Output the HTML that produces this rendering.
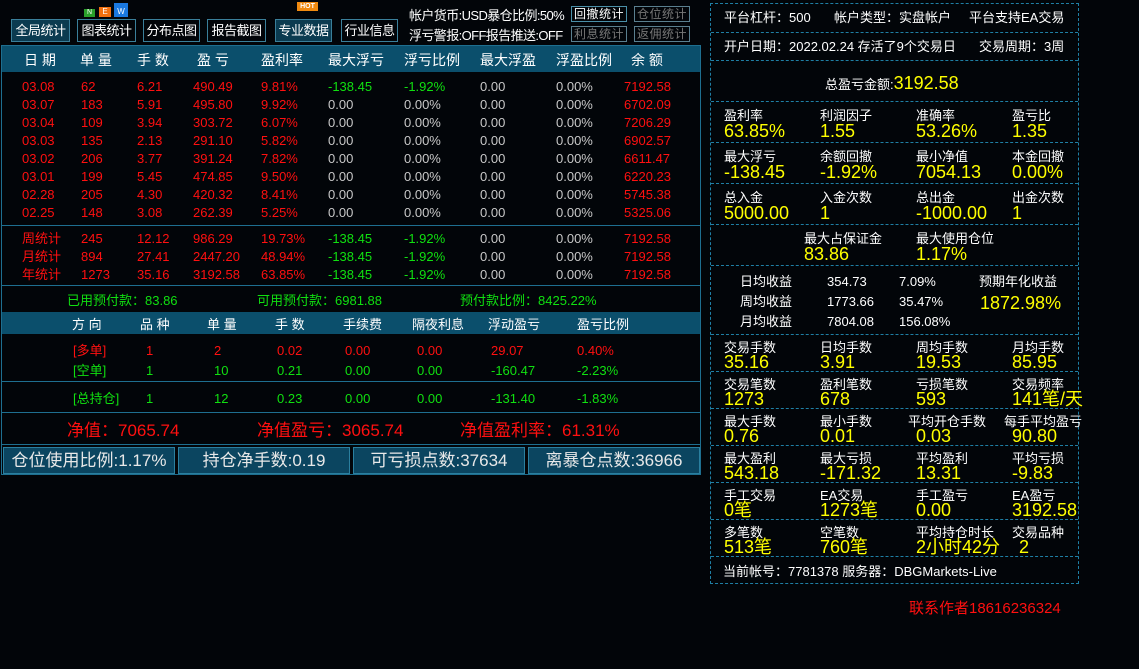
<!DOCTYPE html>
<html><head><meta charset="utf-8"><style>
*{margin:0;padding:0;box-sizing:border-box}
body{width:1139px;height:669px;background:#020509;position:relative;overflow:hidden;font-family:"Liberation Sans","Noto Sans CJK SC",sans-serif;font-size:13px;color:#fff}
.a{position:absolute;white-space:nowrap;line-height:1}
.r{color:#ff1010}.g{color:#10e010}.w{color:#c8c8c8}.y{color:#ffff00}
.btn{position:absolute;top:19px;height:23px;background:#0b3b50;border:1px solid #3a7f9a;color:#fff;font-size:13px;text-align:center;line-height:21px;white-space:nowrap;letter-spacing:-0.5px;overflow:hidden}
.sb{position:absolute;height:16px;border:1px solid #5a7f8f;font-size:12px;line-height:14px;text-align:center;width:56px;white-space:nowrap;letter-spacing:0.5px;overflow:hidden}
.hl{position:absolute;left:1px;width:699px;height:1px;background:#1e6f90}
.dl{position:absolute;left:711px;width:367px;border-top:1px dashed #1f7fa5}
.lb{position:absolute;font-size:13px;line-height:1;white-space:nowrap}
.vl{position:absolute;font-size:18px;line-height:1;color:#ffff00;white-space:nowrap}
.bb{position:absolute;top:447px;height:27px;width:172px;background:#0b4560;border:1px solid #2a7f9f;color:#e8e8e8;font-size:17px;text-align:center;line-height:25px;white-space:nowrap}
</style></head><body>
<div class="btn" style="left:11px;width:59px">全局统计</div>
<div class="btn" style="left:77px;width:59px;background:#020509">图表统计</div>
<div class="btn" style="left:143px;width:57px;background:#020509">分布点图</div>
<div class="btn" style="left:207px;width:59px;background:#020509">报告截图</div>
<div class="btn" style="left:275px;width:57px">专业数据</div>
<div class="btn" style="left:341px;width:57px;background:#020509">行业信息</div>
<div class="a" style="left:84px;top:9px;width:11px;height:8px;background:#2aa02a;font-size:7px;color:#fff;text-align:center">N</div>
<div class="a" style="left:99px;top:7px;width:12px;height:10px;background:#f07010;font-size:8px;color:#fff;text-align:center;line-height:10px">E</div>
<div class="a" style="left:114px;top:3px;width:14px;height:14px;background:#1a78e0;font-size:8px;color:#fff;text-align:center;line-height:18px">W</div>
<div class="a" style="left:297px;top:2px;width:21px;height:9px;background:#f08a10;font-size:7px;color:#fff;text-align:center;line-height:9px;font-weight:bold">HOT</div>
<div class="a" style="left:409px;top:9px;font-size:13px;letter-spacing:-0.6px;color:#fff">帐户货币:USD暴仓比例:50%</div>
<div class="a" style="left:409px;top:29px;font-size:13px;letter-spacing:-0.6px;color:#fff">浮亏警报:OFF报告推送:OFF</div>
<div class="sb" style="left:571px;top:6px;color:#fff;border-color:#4a8fa8">回撤统计</div>
<div class="sb" style="left:634px;top:6px;color:#777">仓位统计</div>
<div class="sb" style="left:571px;top:26px;color:#777">利息统计</div>
<div class="sb" style="left:634px;top:26px;color:#777">返佣统计</div>

<div class="a" style="left:1px;top:45px;width:700px;height:430px;border:1px solid #1e6f90"></div>
<div class="a" style="left:2px;top:46px;width:698px;height:26px;background:#0b4f6c"></div>
<div class="a" style="top:53px;left:24px;font-size:14px;color:#fff">日 期</div>
<div class="a" style="top:53px;left:80px;font-size:14px">单 量</div>
<div class="a" style="top:53px;left:137px;font-size:14px">手 数</div>
<div class="a" style="top:53px;left:197px;font-size:14px">盈 亏</div>
<div class="a" style="top:53px;left:261px;font-size:14px">盈利率</div>
<div class="a" style="top:53px;left:328px;font-size:14px">最大浮亏</div>
<div class="a" style="top:53px;left:404px;font-size:14px">浮亏比例</div>
<div class="a" style="top:53px;left:480px;font-size:14px">最大浮盈</div>
<div class="a" style="top:53px;left:556px;font-size:14px">浮盈比例</div>
<div class="a" style="top:53px;left:631px;font-size:14px">余 额</div>

<div class="hl" style="top:225px"></div>
<div class="hl" style="top:285px"></div>
<div class="a g" style="left:67px;top:294px">已用预付款：83.86</div>
<div class="a g" style="left:257px;top:294px">可用预付款：6981.88</div>
<div class="a g" style="left:460px;top:294px">预付款比例：8425.22%</div>
<div class="a" style="left:2px;top:312px;width:698px;height:22px;background:#0b4f6c"></div>
<div class="a" style="top:318px;left:72px">方 向</div>
<div class="a" style="top:318px;left:140px">品 种</div>
<div class="a" style="top:318px;left:207px">单 量</div>
<div class="a" style="top:318px;left:275px">手 数</div>
<div class="a" style="top:318px;left:343px">手续费</div>
<div class="a" style="top:318px;left:412px">隔夜利息</div>
<div class="a" style="top:318px;left:488px">浮动盈亏</div>
<div class="a" style="top:318px;left:577px">盈亏比例</div>

<div class="a r" style="top:344px;left:73px">[多单]</div><div class="a r" style="top:344px;left:146px">1</div><div class="a r" style="top:344px;left:214px">2</div><div class="a r" style="top:344px;left:277px">0.02</div><div class="a r" style="top:344px;left:345px">0.00</div><div class="a r" style="top:344px;left:417px">0.00</div><div class="a r" style="top:344px;left:491px">29.07</div><div class="a r" style="top:344px;left:577px">0.40%</div>
<div class="a g" style="top:364px;left:73px">[空单]</div><div class="a g" style="top:364px;left:146px">1</div><div class="a g" style="top:364px;left:214px">10</div><div class="a g" style="top:364px;left:277px">0.21</div><div class="a g" style="top:364px;left:345px">0.00</div><div class="a g" style="top:364px;left:417px">0.00</div><div class="a g" style="top:364px;left:491px">-160.47</div><div class="a g" style="top:364px;left:577px">-2.23%</div>
<div class="hl" style="top:381px"></div>
<div class="a g" style="top:392px;left:73px">[总持仓]</div><div class="a g" style="top:392px;left:146px">1</div><div class="a g" style="top:392px;left:214px">12</div><div class="a g" style="top:392px;left:277px">0.23</div><div class="a g" style="top:392px;left:345px">0.00</div><div class="a g" style="top:392px;left:417px">0.00</div><div class="a g" style="top:392px;left:491px">-131.40</div><div class="a g" style="top:392px;left:577px">-1.83%</div>
<div class="hl" style="top:412px"></div>
<div class="a r" style="top:422px;left:67px;font-size:17px">净值：7065.74</div>
<div class="a r" style="top:422px;left:257px;font-size:17px">净值盈亏：3065.74</div>
<div class="a r" style="top:422px;left:460px;font-size:17px">净值盈利率：61.31%</div>
<div class="hl" style="top:444px"></div>
<div class="bb" style="left:3px">仓位使用比例:1.17%</div>
<div class="bb" style="left:178px">持仓净手数:0.19</div>
<div class="bb" style="left:353px">可亏损点数:37634</div>
<div class="bb" style="left:528px">离暴仓点数:36966</div>

<div style="position:absolute;left:0;top:0">
<div class="a r" style="top:80px;left:22px">03.08</div><div class="a r" style="top:80px;left:81px">62</div><div class="a r" style="top:80px;left:137px">6.21</div><div class="a r" style="top:80px;left:193px">490.49</div><div class="a r" style="top:80px;left:261px">9.81%</div><div class="a g" style="top:80px;left:328px">-138.45</div><div class="a g" style="top:80px;left:404px">-1.92%</div><div class="a w" style="top:80px;left:480px">0.00</div><div class="a w" style="top:80px;left:556px">0.00%</div><div class="a r" style="top:80px;left:624px">7192.58</div>
<div class="a r" style="top:98px;left:22px">03.07</div><div class="a r" style="top:98px;left:81px">183</div><div class="a r" style="top:98px;left:137px">5.91</div><div class="a r" style="top:98px;left:193px">495.80</div><div class="a r" style="top:98px;left:261px">9.92%</div><div class="a w" style="top:98px;left:328px">0.00</div><div class="a w" style="top:98px;left:404px">0.00%</div><div class="a w" style="top:98px;left:480px">0.00</div><div class="a w" style="top:98px;left:556px">0.00%</div><div class="a r" style="top:98px;left:624px">6702.09</div>
<div class="a r" style="top:116px;left:22px">03.04</div><div class="a r" style="top:116px;left:81px">109</div><div class="a r" style="top:116px;left:137px">3.94</div><div class="a r" style="top:116px;left:193px">303.72</div><div class="a r" style="top:116px;left:261px">6.07%</div><div class="a w" style="top:116px;left:328px">0.00</div><div class="a w" style="top:116px;left:404px">0.00%</div><div class="a w" style="top:116px;left:480px">0.00</div><div class="a w" style="top:116px;left:556px">0.00%</div><div class="a r" style="top:116px;left:624px">7206.29</div>
<div class="a r" style="top:134px;left:22px">03.03</div><div class="a r" style="top:134px;left:81px">135</div><div class="a r" style="top:134px;left:137px">2.13</div><div class="a r" style="top:134px;left:193px">291.10</div><div class="a r" style="top:134px;left:261px">5.82%</div><div class="a w" style="top:134px;left:328px">0.00</div><div class="a w" style="top:134px;left:404px">0.00%</div><div class="a w" style="top:134px;left:480px">0.00</div><div class="a w" style="top:134px;left:556px">0.00%</div><div class="a r" style="top:134px;left:624px">6902.57</div>
<div class="a r" style="top:152px;left:22px">03.02</div><div class="a r" style="top:152px;left:81px">206</div><div class="a r" style="top:152px;left:137px">3.77</div><div class="a r" style="top:152px;left:193px">391.24</div><div class="a r" style="top:152px;left:261px">7.82%</div><div class="a w" style="top:152px;left:328px">0.00</div><div class="a w" style="top:152px;left:404px">0.00%</div><div class="a w" style="top:152px;left:480px">0.00</div><div class="a w" style="top:152px;left:556px">0.00%</div><div class="a r" style="top:152px;left:624px">6611.47</div>
<div class="a r" style="top:170px;left:22px">03.01</div><div class="a r" style="top:170px;left:81px">199</div><div class="a r" style="top:170px;left:137px">5.45</div><div class="a r" style="top:170px;left:193px">474.85</div><div class="a r" style="top:170px;left:261px">9.50%</div><div class="a w" style="top:170px;left:328px">0.00</div><div class="a w" style="top:170px;left:404px">0.00%</div><div class="a w" style="top:170px;left:480px">0.00</div><div class="a w" style="top:170px;left:556px">0.00%</div><div class="a r" style="top:170px;left:624px">6220.23</div>
<div class="a r" style="top:188px;left:22px">02.28</div><div class="a r" style="top:188px;left:81px">205</div><div class="a r" style="top:188px;left:137px">4.30</div><div class="a r" style="top:188px;left:193px">420.32</div><div class="a r" style="top:188px;left:261px">8.41%</div><div class="a w" style="top:188px;left:328px">0.00</div><div class="a w" style="top:188px;left:404px">0.00%</div><div class="a w" style="top:188px;left:480px">0.00</div><div class="a w" style="top:188px;left:556px">0.00%</div><div class="a r" style="top:188px;left:624px">5745.38</div>
<div class="a r" style="top:206px;left:22px">02.25</div><div class="a r" style="top:206px;left:81px">148</div><div class="a r" style="top:206px;left:137px">3.08</div><div class="a r" style="top:206px;left:193px">262.39</div><div class="a r" style="top:206px;left:261px">5.25%</div><div class="a w" style="top:206px;left:328px">0.00</div><div class="a w" style="top:206px;left:404px">0.00%</div><div class="a w" style="top:206px;left:480px">0.00</div><div class="a w" style="top:206px;left:556px">0.00%</div><div class="a r" style="top:206px;left:624px">5325.06</div>
<div class="a r" style="top:232px;left:22px">周统计</div><div class="a r" style="top:232px;left:81px">245</div><div class="a r" style="top:232px;left:137px">12.12</div><div class="a r" style="top:232px;left:193px">986.29</div><div class="a r" style="top:232px;left:261px">19.73%</div><div class="a g" style="top:232px;left:328px">-138.45</div><div class="a g" style="top:232px;left:404px">-1.92%</div><div class="a w" style="top:232px;left:480px">0.00</div><div class="a w" style="top:232px;left:556px">0.00%</div><div class="a r" style="top:232px;left:624px">7192.58</div>
<div class="a r" style="top:250px;left:22px">月统计</div><div class="a r" style="top:250px;left:81px">894</div><div class="a r" style="top:250px;left:137px">27.41</div><div class="a r" style="top:250px;left:193px">2447.20</div><div class="a r" style="top:250px;left:261px">48.94%</div><div class="a g" style="top:250px;left:328px">-138.45</div><div class="a g" style="top:250px;left:404px">-1.92%</div><div class="a w" style="top:250px;left:480px">0.00</div><div class="a w" style="top:250px;left:556px">0.00%</div><div class="a r" style="top:250px;left:624px">7192.58</div>
<div class="a r" style="top:268px;left:22px">年统计</div><div class="a r" style="top:268px;left:81px">1273</div><div class="a r" style="top:268px;left:137px">35.16</div><div class="a r" style="top:268px;left:193px">3192.58</div><div class="a r" style="top:268px;left:261px">63.85%</div><div class="a g" style="top:268px;left:328px">-138.45</div><div class="a g" style="top:268px;left:404px">-1.92%</div><div class="a w" style="top:268px;left:480px">0.00</div><div class="a w" style="top:268px;left:556px">0.00%</div><div class="a r" style="top:268px;left:624px">7192.58</div>
</div>

<div class="a" style="left:710px;top:3px;width:369px;height:581px;border:1px dashed #1f7fa5"></div>
<div class="dl" style="top:32px"></div><div class="dl" style="top:60px"></div><div class="dl" style="top:101px"></div><div class="dl" style="top:142px"></div><div class="dl" style="top:183px"></div><div class="dl" style="top:224px"></div><div class="dl" style="top:265px"></div><div class="dl" style="top:334px"></div><div class="dl" style="top:371px"></div><div class="dl" style="top:408px"></div><div class="dl" style="top:445px"></div><div class="dl" style="top:482px"></div><div class="dl" style="top:519px"></div><div class="dl" style="top:556px"></div>
<div class="lb" style="left:724px;top:11px">平台杠杆：500</div>
<div class="lb" style="left:834px;top:11px">帐户类型：实盘帐户</div>
<div class="lb" style="left:969px;top:11px">平台支持EA交易</div>
<div class="lb" style="left:724px;top:40px">开户日期：2022.02.24 存活了9个交易日</div>
<div class="lb" style="left:979px;top:40px">交易周期：3周</div>
<div class="lb" style="left:825px;top:74px">总盈亏金额:<span style="font-size:18px;color:#ffff00">3192.58</span></div>

<div class="lb" style="left:724px;top:109px">盈利率</div><div class="vl" style="left:724px;top:122px">63.85%</div>
<div class="lb" style="left:820px;top:109px">利润因子</div><div class="vl" style="left:820px;top:122px">1.55</div>
<div class="lb" style="left:916px;top:109px">准确率</div><div class="vl" style="left:916px;top:122px">53.26%</div>
<div class="lb" style="left:1012px;top:109px">盈亏比</div><div class="vl" style="left:1012px;top:122px">1.35</div>

<div class="lb" style="left:724px;top:150px">最大浮亏</div><div class="vl" style="left:724px;top:163px">-138.45</div>
<div class="lb" style="left:820px;top:150px">余额回撤</div><div class="vl" style="left:820px;top:163px">-1.92%</div>
<div class="lb" style="left:916px;top:150px">最小净值</div><div class="vl" style="left:916px;top:163px">7054.13</div>
<div class="lb" style="left:1012px;top:150px">本金回撤</div><div class="vl" style="left:1012px;top:163px">0.00%</div>

<div class="lb" style="left:724px;top:191px">总入金</div><div class="vl" style="left:724px;top:204px">5000.00</div>
<div class="lb" style="left:820px;top:191px">入金次数</div><div class="vl" style="left:820px;top:204px">1</div>
<div class="lb" style="left:916px;top:191px">总出金</div><div class="vl" style="left:916px;top:204px">-1000.00</div>
<div class="lb" style="left:1012px;top:191px">出金次数</div><div class="vl" style="left:1012px;top:204px">1</div>

<div class="lb" style="left:804px;top:232px">最大占保证金</div><div class="vl" style="left:804px;top:245px">83.86</div>
<div class="lb" style="left:916px;top:232px">最大使用仓位</div><div class="vl" style="left:916px;top:245px">1.17%</div>

<div class="lb" style="left:740px;top:275px">日均收益</div><div class="lb" style="left:827px;top:275px">354.73</div><div class="lb" style="left:899px;top:275px">7.09%</div><div class="lb" style="left:979px;top:275px">预期年化收益</div>
<div class="lb" style="left:740px;top:295px">周均收益</div><div class="lb" style="left:827px;top:295px">1773.66</div><div class="lb" style="left:899px;top:295px">35.47%</div><div class="vl" style="left:980px;top:294px">1872.98%</div>
<div class="lb" style="left:740px;top:315px">月均收益</div><div class="lb" style="left:827px;top:315px">7804.08</div><div class="lb" style="left:899px;top:315px">156.08%</div>

<div class="lb" style="left:724px;top:341px">交易手数</div><div class="vl" style="left:724px;top:353px">35.16</div>
<div class="lb" style="left:820px;top:341px">日均手数</div><div class="vl" style="left:820px;top:353px">3.91</div>
<div class="lb" style="left:916px;top:341px">周均手数</div><div class="vl" style="left:916px;top:353px">19.53</div>
<div class="lb" style="left:1012px;top:341px">月均手数</div><div class="vl" style="left:1012px;top:353px">85.95</div>

<div class="lb" style="left:724px;top:378px">交易笔数</div><div class="vl" style="left:724px;top:390px">1273</div>
<div class="lb" style="left:820px;top:378px">盈利笔数</div><div class="vl" style="left:820px;top:390px">678</div>
<div class="lb" style="left:916px;top:378px">亏损笔数</div><div class="vl" style="left:916px;top:390px">593</div>
<div class="lb" style="left:1012px;top:378px">交易频率</div><div class="vl" style="left:1012px;top:390px">141笔/天</div>

<div class="lb" style="left:724px;top:415px">最大手数</div><div class="vl" style="left:724px;top:427px">0.76</div>
<div class="lb" style="left:820px;top:415px">最小手数</div><div class="vl" style="left:820px;top:427px">0.01</div>
<div class="lb" style="left:908px;top:415px">平均开仓手数</div><div class="vl" style="left:916px;top:427px">0.03</div>
<div class="lb" style="left:1004px;top:415px">每手平均盈亏</div><div class="vl" style="left:1012px;top:427px">90.80</div>

<div class="lb" style="left:724px;top:452px">最大盈利</div><div class="vl" style="left:724px;top:464px">543.18</div>
<div class="lb" style="left:820px;top:452px">最大亏损</div><div class="vl" style="left:820px;top:464px">-171.32</div>
<div class="lb" style="left:916px;top:452px">平均盈利</div><div class="vl" style="left:916px;top:464px">13.31</div>
<div class="lb" style="left:1012px;top:452px">平均亏损</div><div class="vl" style="left:1012px;top:464px">-9.83</div>

<div class="lb" style="left:724px;top:489px">手工交易</div><div class="vl" style="left:724px;top:501px">0笔</div>
<div class="lb" style="left:820px;top:489px">EA交易</div><div class="vl" style="left:820px;top:501px">1273笔</div>
<div class="lb" style="left:916px;top:489px">手工盈亏</div><div class="vl" style="left:916px;top:501px">0.00</div>
<div class="lb" style="left:1012px;top:489px">EA盈亏</div><div class="vl" style="left:1012px;top:501px">3192.58</div>

<div class="lb" style="left:724px;top:526px">多笔数</div><div class="vl" style="left:724px;top:538px">513笔</div>
<div class="lb" style="left:820px;top:526px">空笔数</div><div class="vl" style="left:820px;top:538px">760笔</div>
<div class="lb" style="left:916px;top:526px">平均持仓时长</div><div class="vl" style="left:916px;top:538px">2小时42分</div>
<div class="lb" style="left:1012px;top:526px">交易品种</div><div class="vl" style="left:1019px;top:538px">2</div>

<div class="lb" style="left:723px;top:565px">当前帐号：7781378 服务器：DBGMarkets-Live</div>
<div class="a" style="left:909px;top:601px;font-size:15px;color:#ff1010">联系作者18616236324</div>
</body></html>
